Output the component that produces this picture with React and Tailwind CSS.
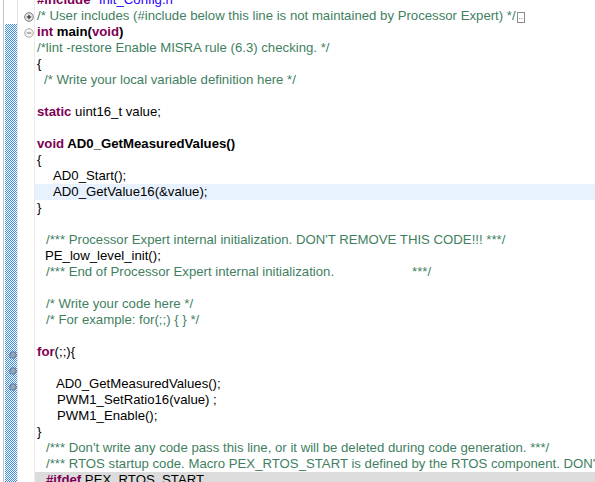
import React from "react";

const KW = ({ children }) => <span className="font-bold text-[#7f0055]">{children}</span>;
const CM = ({ children }) => <span className="text-[#3f7f5f]">{children}</span>;

function FoldIcon({ open }) {
  return (
    <svg width="10" height="10" viewBox="0 0 10 10">
      <circle cx="5" cy="5" r="4.3" fill={open ? "#f4f4f4" : "#e8e8e8"} stroke={open ? "#a8a8a8" : "#7a7a7a"} strokeWidth="1" />
      <path d="M2.8 5h4.4" stroke={open ? "#8a8a8a" : "#333"} strokeWidth="1.2" />
      {!open && <path d="M5 2.8v4.4" stroke="#333" strokeWidth="1.2" />}
    </svg>
  );
}

function Marker() {
  return (
    <svg width="8" height="8" viewBox="0 0 8 8" className="mt-[7px] ml-[3px]">
      <circle cx="4" cy="4" r="3.3" fill="#8ea6bd" stroke="#5f7891" strokeWidth="1" />
    </svg>
  );
}

function Row({ bar, marker, fold, hl, pl = 2, children }) {
  const band = hl === "cur" ? "bg-[#e8f2fe]" : hl === "gray" ? "bg-[#dcdcdc]" : "";
  return (
    <div className="flex h-4">
      <div className="w-[3px]" />
      <div className="w-px bg-[#c4c4c4]" />
      <div className="w-px" />
      <div
        className={
          "w-[12px] flex justify-center " +
          (bar ? "bg-[repeating-conic-gradient(#3d8fe6_0_25%,#ffffff_0_50%)] bg-[length:2px_2px]" : "")
        }
      >
        {marker && <Marker />}
      </div>
      <div className="w-px bg-[#e4e4e4]" />
      <div className="w-[16px] flex items-center justify-center pl-[6px] pt-[1px]">
        {fold && <FoldIcon open={fold === "open"} />}
      </div>
      <div className="w-px bg-[#ececec]" />
      <div className={"flex-1 overflow-hidden whitespace-pre " + band} style={{ paddingLeft: pl }}>
        {children}
      </div>
    </div>
  );
}

export default function App() {
  return (
    <div className="w-[595px] h-[482px] overflow-hidden bg-white text-black font-['Liberation_Sans',Arial,sans-serif] text-[13.2px] leading-4">
      <div className="-mt-2">
        <Row>
          <KW>#include</KW> <span className="text-[#2a00ff]">"Init_Config.h"</span>
        </Row>
        <Row fold="closed">
          <CM>/* User includes (#include below this line is not maintained by Processor Expert) */</CM>
          <span className="inline-block align-top ml-px mt-[4px] w-[8px] h-[11px] border border-[#8c8c8c] text-[8px] leading-[8px] text-[#555] text-center">..</span>
        </Row>
        <Row bar fold="open">
          <KW>int</KW>
          <span className="font-bold"> main(</span>
          <KW>void</KW>
          <span className="font-bold">)</span>
        </Row>
        <Row bar>
          <CM>/*lint -restore Enable MISRA rule (6.3) checking. */</CM>
        </Row>
        <Row bar>{"{"}</Row>
        <Row bar pl={9}>
          <CM>/* Write your local variable definition here */</CM>
        </Row>
        <Row bar />
        <Row bar>
          <KW>static</KW> uint16_t value;
        </Row>
        <Row bar />
        <Row bar>
          <KW>void</KW>
          <span className="font-bold"> AD0_GetMeasuredValues()</span>
        </Row>
        <Row bar>{"{"}</Row>
        <Row bar pl={18}>AD0_Start();</Row>
        <Row bar hl="cur" pl={18}>AD0_GetValue16(&amp;value);</Row>
        <Row bar>{"}"}</Row>
        <Row bar />
        <Row bar pl={11}>
          <CM>/*** Processor Expert internal initialization. DON'T REMOVE THIS CODE!!! ***/</CM>
        </Row>
        <Row bar pl={10}>PE_low_level_init();</Row>
        <Row bar pl={11}>
          <CM>
            <span className="inline-block w-[366px]">/*** End of Processor Expert internal initialization.</span>
            ***/
          </CM>
        </Row>
        <Row bar />
        <Row bar pl={11}>
          <CM>/* Write your code here */</CM>
        </Row>
        <Row bar pl={11}>
          <CM>/* For example: for(;;) {"{ }"} */</CM>
        </Row>
        <Row bar />
        <Row bar marker>
          <KW>for</KW>(;;){"{"}
        </Row>
        <Row bar marker />
        <Row bar marker pl={21}>AD0_GetMeasuredValues();</Row>
        <Row bar pl={22}>PWM1_SetRatio16(value) ;</Row>
        <Row bar pl={22}>PWM1_Enable();</Row>
        <Row bar>{"}"}</Row>
        <Row bar pl={11}>
          <CM>/*** Don't write any code pass this line, or it will be deleted during code generation. ***/</CM>
        </Row>
        <Row bar pl={11}>
          <CM>/*** RTOS startup code. Macro PEX_RTOS_START is defined by the RTOS component. DON'T MODIFY THIS CODE!!! ***/</CM>
        </Row>
        <Row bar hl="gray" pl={11}>
          <KW>#ifdef</KW> PEX_RTOS_START
        </Row>
      </div>
    </div>
  );
}
